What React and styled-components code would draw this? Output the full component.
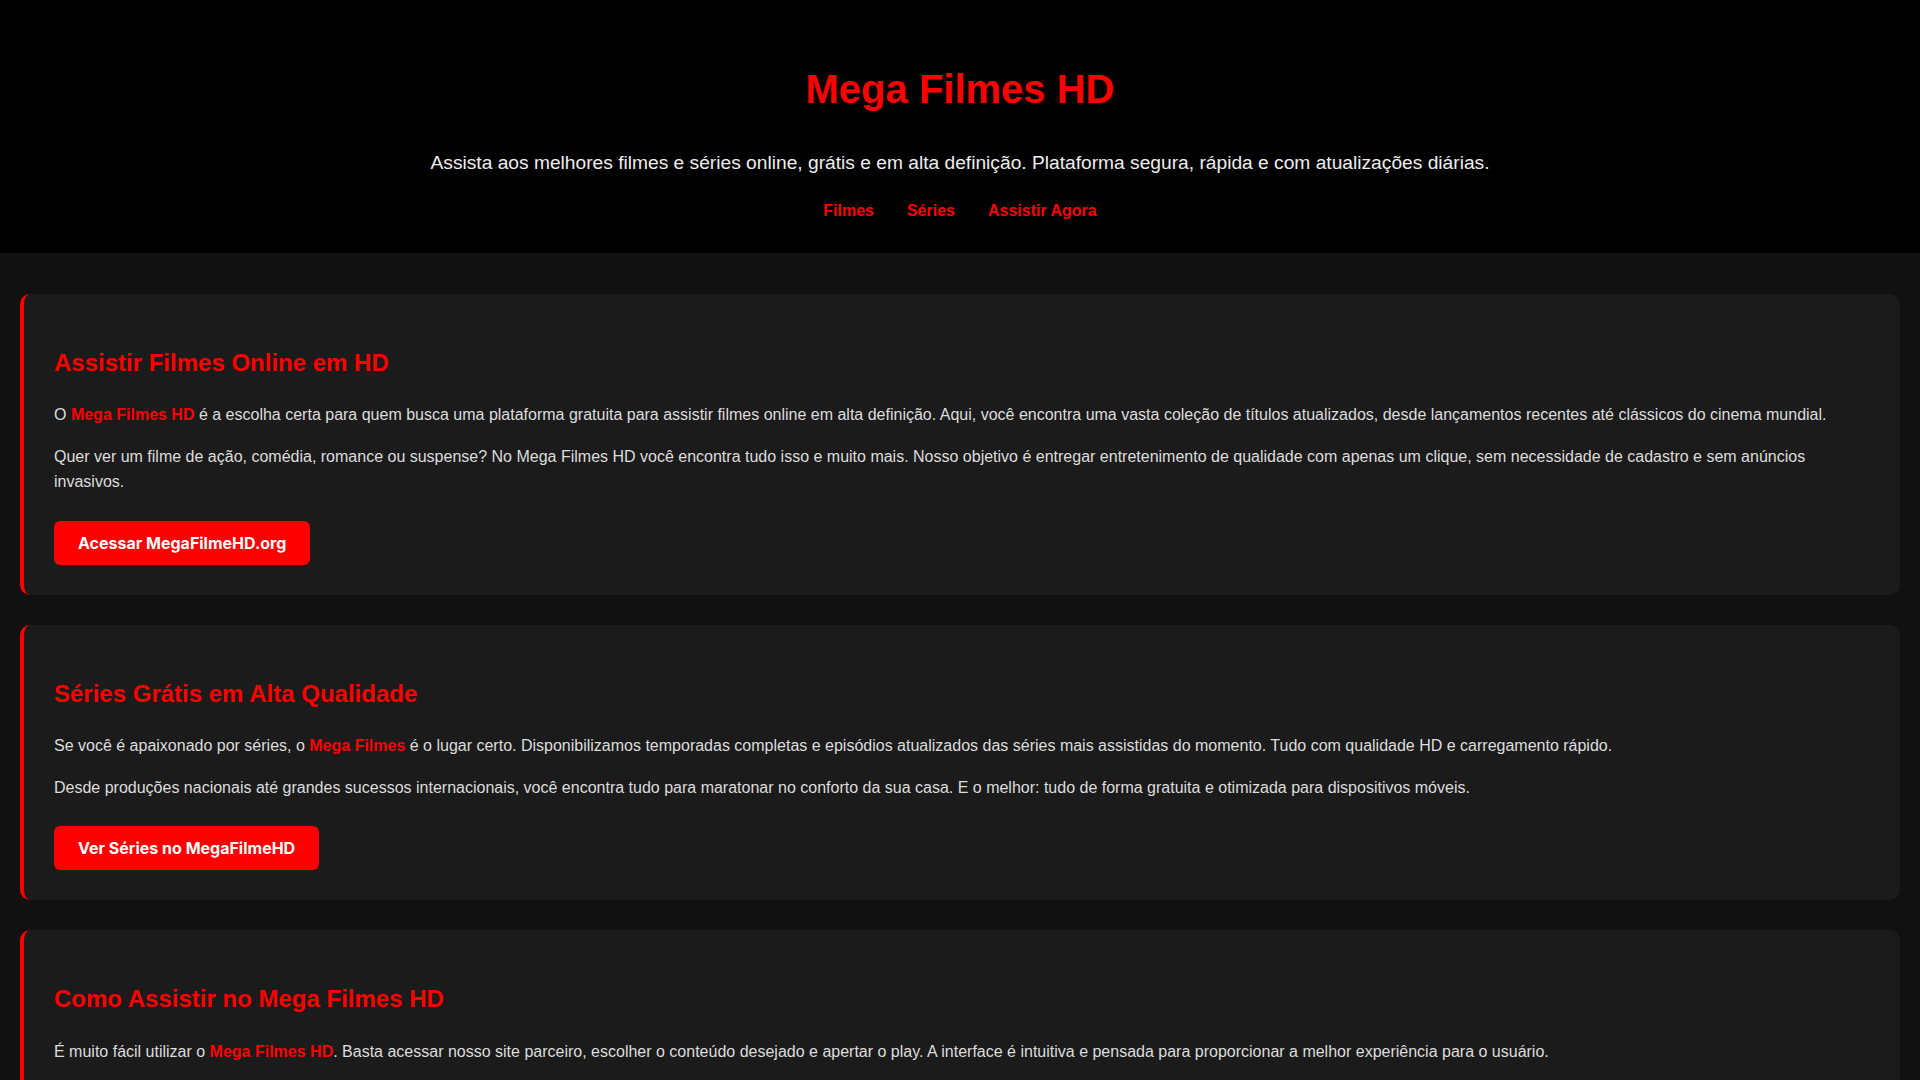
import React from "react";
import styled, { createGlobalStyle } from "styled-components";

const GlobalStyle = createGlobalStyle`
  html, body {
    margin: 0;
    padding: 0;
    height: 100%;
  }
  body {
    background-color: #111111;
    color: #dddddd;
    font-family: "Liberation Sans", Arial, Helvetica, sans-serif;
    line-height: 1.6;
    overflow: hidden;
  }
`;

const StPage = styled.div`
  height: 100vh;
  overflow-y: scroll;
  background-color: #111111;

  &::-webkit-scrollbar {
    width: 10px;
  }
  &::-webkit-scrollbar-track {
    background: #ffffff;
  }
  &::-webkit-scrollbar-thumb {
    background: #111111;
    border-radius: 5px;
    border: 2px solid #ffffff;
  }
`;

const StHeader = styled.header`
  background-color: #000000;
  padding: 30px 20px;
  text-align: center;
`;

const StTitle = styled.h1`
  color: #ff0000;
  font-size: 40px;
  font-weight: bold;
  margin: 26.8px 0;
`;

const StSubtitle = styled.p`
  color: #eeeeee;
  font-size: 19.2px;
  margin: 19.2px 0;
`;

const StNav = styled.nav`
  display: flex;
  justify-content: center;
  gap: 33px;
`;

const StNavLink = styled.a`
  color: #ff0000;
  font-weight: bold;
  font-size: 16px;
  text-decoration: none;
  cursor: pointer;
  &:hover {
    text-decoration: underline;
  }
`;

const StMain = styled.main`
  padding: 41px 20px 10px;
`;

const StCard = styled.section`
  background-color: #1b1b1b;
  border-left: 4px solid #ff0000;
  border-radius: 10px;
  padding: 30px;
  margin-bottom: 30px;
`;

const StCardTitle = styled.h2`
  color: #ff0000;
  font-size: 24px;
  font-weight: bold;
  margin: 19.9px 0;
`;

const StText = styled.p`
  font-size: 16px;
  margin: 16px 0;
`;

const StHighlight = styled.strong`
  color: #ff0000;
`;

const StButton = styled.a`
  display: inline-block;
  margin-top: 10px;
  padding: 12px 24px;
  background-color: #ff0000;
  color: #ffffff;
  font-family: Inter, "Liberation Sans", sans-serif;
  font-weight: bold;
  font-size: 16px;
  line-height: 20px;
  border-radius: 6px;
  text-decoration: none;
  cursor: pointer;
  &:hover {
    opacity: 0.85;
  }
`;

const StFooter = styled.footer`
  background-color: #000000;
  padding: 30px 20px;
  text-align: center;
  color: #999999;
  font-size: 14px;
`;

const StFooterText = styled.p`
  margin: 10px 0;
`;

function App() {
  return (
    <StPage>
      <GlobalStyle />
      <StHeader>
        <StTitle>Mega Filmes HD</StTitle>
        <StSubtitle>
          Assista aos melhores filmes e séries online, grátis e em alta definição. Plataforma segura, rápida e com atualizações diárias.
        </StSubtitle>
        <StNav>
          <StNavLink>Filmes</StNavLink>
          <StNavLink>Séries</StNavLink>
          <StNavLink>Assistir Agora</StNavLink>
        </StNav>
      </StHeader>

      <StMain>
        <StCard>
          <StCardTitle>Assistir Filmes Online em HD</StCardTitle>
          <StText>
            O <StHighlight>Mega Filmes HD</StHighlight> é a escolha certa para quem busca uma plataforma gratuita para assistir filmes online em alta definição. Aqui, você encontra uma vasta coleção de títulos atualizados, desde lançamentos recentes até clássicos do cinema mundial.
          </StText>
          <StText>
            Quer ver um filme de ação, comédia, romance ou suspense? No Mega Filmes HD você encontra tudo isso e muito mais. Nosso objetivo é entregar entretenimento de qualidade com apenas um clique, sem necessidade de cadastro e sem anúncios invasivos.
          </StText>
          <StButton>Acessar MegaFilmeHD.org</StButton>
        </StCard>

        <StCard>
          <StCardTitle>Séries Grátis em Alta Qualidade</StCardTitle>
          <StText>
            Se você é apaixonado por séries, o <StHighlight>Mega Filmes</StHighlight> é o lugar certo. Disponibilizamos temporadas completas e episódios atualizados das séries mais assistidas do momento. Tudo com qualidade HD e carregamento rápido.
          </StText>
          <StText>
            Desde produções nacionais até grandes sucessos internacionais, você encontra tudo para maratonar no conforto da sua casa. E o melhor: tudo de forma gratuita e otimizada para dispositivos móveis.
          </StText>
          <StButton>Ver Séries no MegaFilmeHD</StButton>
        </StCard>

        <StCard>
          <StCardTitle>Como Assistir no Mega Filmes HD</StCardTitle>
          <StText>
            É muito fácil utilizar o <StHighlight>Mega Filmes HD</StHighlight>. Basta acessar nosso site parceiro, escolher o conteúdo desejado e apertar o play. A interface é intuitiva e pensada para proporcionar a melhor experiência para o usuário.
          </StText>
          <StText>
            Funciona no computador, no celular e na smart TV, sem precisar instalar nada. Basta ter uma conexão com a internet e aproveitar.
          </StText>
          <StButton>Assistir Agora no MegaFilmeHD</StButton>
        </StCard>

        <StCard>
          <StCardTitle>Lançamentos e Clássicos</StCardTitle>
          <StText>
            No <StHighlight>Mega Filmes HD</StHighlight> você acompanha os lançamentos do cinema e revive os grandes clássicos que marcaram gerações, tudo organizado por gênero e ano.
          </StText>
          <StText>
            Novos títulos são adicionados todos os dias para que você nunca fique sem opção do que assistir.
          </StText>
          <StButton>Ver Lançamentos</StButton>
        </StCard>

        <StCard>
          <StCardTitle>Por que escolher o Mega Filmes HD?</StCardTitle>
          <StText>
            Qualidade de imagem, variedade de títulos e facilidade de uso fazem do <StHighlight>Mega Filmes HD</StHighlight> uma das plataformas mais procuradas do Brasil.
          </StText>
          <StText>
            Sem cadastro, sem mensalidade e com atualizações diárias para toda a família.
          </StText>
        </StCard>
      </StMain>

      <StFooter>
        <StFooterText>© 2025 Mega Filmes HD. Todos os direitos reservados.</StFooterText>
        <StFooterText>Este site não hospeda nenhum conteúdo, apenas indica links disponíveis na internet.</StFooterText>
        <StFooterText>Filmes · Séries · Assistir Agora</StFooterText>
      </StFooter>
    </StPage>
  );
}

export default App;
